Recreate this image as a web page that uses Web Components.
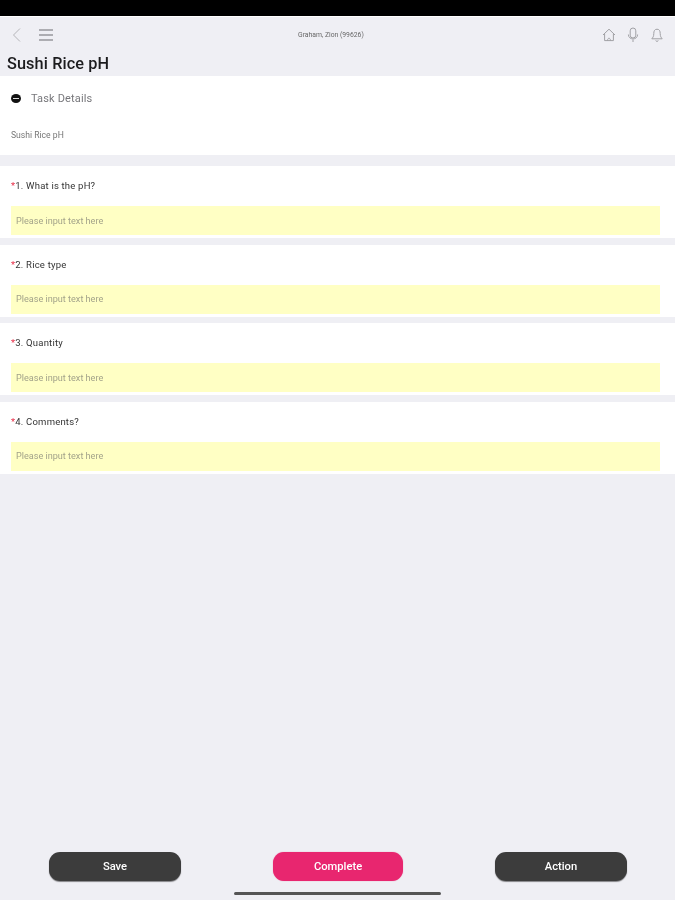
<!DOCTYPE html>
<html>
<head>
<meta charset="utf-8">
<title>Sushi Rice pH</title>
<style>
html, body { margin: 0; padding: 0; height: 100%; }
body { background: #efeff4; font-family: Roboto, "Liberation Sans", sans-serif; }
task-page { height: 900px; }
</style>
</head>
<body>
<task-page>
  <top-bar slot="top" user="Graham, Zion (99626)" heading="Sushi Rice pH"></top-bar>
  <task-details summary="Task Details" text="Sushi Rice pH"></task-details>
  <task-question num="1" label="What is the pH?"></task-question>
  <task-question num="2" label="Rice type"></task-question>
  <task-question num="3" label="Quantity"></task-question>
  <task-question num="4" label="Comments?"></task-question>
  <action-button slot="actions">Save</action-button>
  <action-button slot="actions" kind="primary">Complete</action-button>
  <action-button slot="actions">Action</action-button>
</task-page>

<script>
class TaskPage extends HTMLElement {
  constructor() {
    super();
    this.attachShadow({ mode: 'open' }).innerHTML = `
<style>
:host { display: flex; flex-direction: column; position: relative; background: #efeff4; overflow: hidden; }
.status { height: 16px; background: #000; border-bottom: 1px solid #fff; flex: none; }
main { flex: 1; display: flex; flex-direction: column; }
footer { flex: none; display: flex; justify-content: space-between; padding: 0 48px 19px 49px; }
.home { position: absolute; left: 234px; bottom: 5px; width: 207px; height: 3px; background: #555; border-radius: 2px; filter: blur(.4px); }
</style>
<div class="status"></div>
<slot name="top"></slot>
<main><slot></slot></main>
<footer><slot name="actions"></slot></footer>
<div class="home"></div>`;
  }
}

class TopBar extends HTMLElement {
  constructor() {
    super();
    this.attachShadow({ mode: 'open' }).innerHTML = `
<style>
:host { display: block; height: 59px; color: #8a8a8e; }
.row { height: 36px; display: grid; grid-template-columns: 288px auto 1fr; align-items: center; padding: 0 11.5px 0 10px; }
.left, .right { display: flex; align-items: center; }
.left { gap: 15px; }
.right { justify-content: flex-end; gap: 10px; }
svg { display: block; fill: none; stroke: #a0a0a4; stroke-width: 1; filter: blur(.4px); }
#user { font-size: 6.8px; color: #666; filter: blur(.45px); }
h1 { margin: 0; padding: 1px 0 0 7px; font-size: 16.3px; font-weight: 500; line-height: 20px; color: #1c1c1e; letter-spacing: .1px; filter: blur(.35px); }
</style>
<div class="row">
  <div class="left">
    <svg width="14" height="16" viewBox="0 0 14 16" style="stroke:#b4b4b8"><path d="M10 1.5 L3.5 8 L10 14.5"/></svg>
    <svg width="14" height="12" viewBox="0 0 14 12" style="stroke-width:1.5;stroke:#98989c"><path d="M0 1H14M0 6H14M0 11H14"/></svg>
  </div>
  <span id="user"></span>
  <div class="right">
    <svg width="14" height="14" viewBox="0 0 14 14"><path d="M1 7 L7 1.2 L13 7 M2.6 6 V12.6 H11.4 V6 M5.5 12.6 C5.5 9.5 8.5 9.5 8.5 12.6"/></svg>
    <svg width="14" height="16" viewBox="0 0 14 16"><rect x="4.2" y="1" width="5.6" height="10" rx="2.8"/><path d="M2.4 7.5 C2.4 13.4 11.6 13.4 11.6 7.5 M7 12.5 V15"/></svg>
    <svg width="14" height="15" viewBox="0 0 14 15"><path d="M7 1.2 C4.5 1.2 3.8 3.2 3.8 5.5 C3.8 8.5 2.8 9.6 1.8 10.8 H12.2 C11.2 9.6 10.2 8.5 10.2 5.5 C10.2 3.2 9.5 1.2 7 1.2 Z M5.8 12.4 C6 13.8 8 13.8 8.2 12.4"/></svg>
  </div>
</div>
<h1 id="title"></h1>`;
  }
  connectedCallback() {
    this.shadowRoot.querySelector('#user').textContent = this.getAttribute('user');
    this.shadowRoot.querySelector('#title').textContent = this.getAttribute('heading');
  }
}

class TaskDetails extends HTMLElement {
  constructor() {
    super();
    this.attachShadow({ mode: 'open' }).innerHTML = `
<style>
:host { display: block; background: #fff; height: 79px; margin-bottom: 11px; box-sizing: border-box; padding: 14px 11px 0; }
.head { display: flex; align-items: center; gap: 10px; height: 16px; font-size: 11px; color: #77777b; letter-spacing: .15px; filter: blur(.4px); }
.dot { width: 10px; height: 9px; border-radius: 50%; background: #111; position: relative; flex: none; }
.dot::after { content: ""; position: absolute; left: 2px; right: 2px; top: 4px; height: 1px; background: #ddd; }
p { margin: 24px 0 0; font-size: 8.6px; line-height: 10px; color: #777; filter: blur(.4px); }
</style>
<div class="head"><span class="dot"></span><span id="sum"></span></div>
<p id="txt"></p>`;
  }
  connectedCallback() {
    this.shadowRoot.querySelector('#sum').textContent = this.getAttribute('summary');
    this.shadowRoot.querySelector('#txt').textContent = this.getAttribute('text');
  }
}

class TaskQuestion extends HTMLElement {
  constructor() {
    super();
    this.attachShadow({ mode: 'open' }).innerHTML = `
<style>
:host { display: block; background: #fff; height: 72px; margin-bottom: 6.5px; box-sizing: border-box; padding: 14px 15px 0 11px; }
.q { height: 12px; line-height: 12px; font-size: 9.5px; color: #333; letter-spacing: .2px; filter: blur(.4px); }
.q b { color: #e8304a; font-weight: 400; }
input { display: block; box-sizing: border-box; width: 100%; height: 29px; margin-top: 14px; border: 0; padding: 0 5px; background: #ffffc4; font: 9.1px Roboto, "Liberation Sans", sans-serif; outline: 0; filter: blur(.35px); }
input::placeholder { color: #a3a38a; opacity: 1; }
</style>
<div class="q"><b>*</b><span id="t"></span></div>
<input type="text" placeholder="Please input text here">`;
  }
  connectedCallback() {
    this.shadowRoot.querySelector('#t').textContent = `${this.getAttribute('num')}. ${this.getAttribute('label')}`;
  }
}

class ActionButton extends HTMLElement {
  constructor() {
    super();
    this.attachShadow({ mode: 'open' }).innerHTML = `
<style>
:host { display: block; width: 132px; height: 29px; }
:host([kind="primary"]) { width: 130px; }
button { display: block; width: 100%; height: 100%; box-sizing: border-box; border: 0; border-radius: 11px; background: #3c3c3c; color: #fff; font: 500 11.2px Roboto, "Liberation Sans", sans-serif; box-shadow: 0 1px 1px rgba(0,0,0,.45); padding: 0; }
:host([kind="primary"]) button { background: #e8266f; box-shadow: 0 0 1px rgba(232,38,111,.6); }
span { display: block; filter: blur(.35px); }
</style>
<button><span><slot></slot></span></button>`;
  }
}

customElements.define('task-page', TaskPage);
customElements.define('top-bar', TopBar);
customElements.define('task-details', TaskDetails);
customElements.define('task-question', TaskQuestion);
customElements.define('action-button', ActionButton);
</script>
</body>
</html>
